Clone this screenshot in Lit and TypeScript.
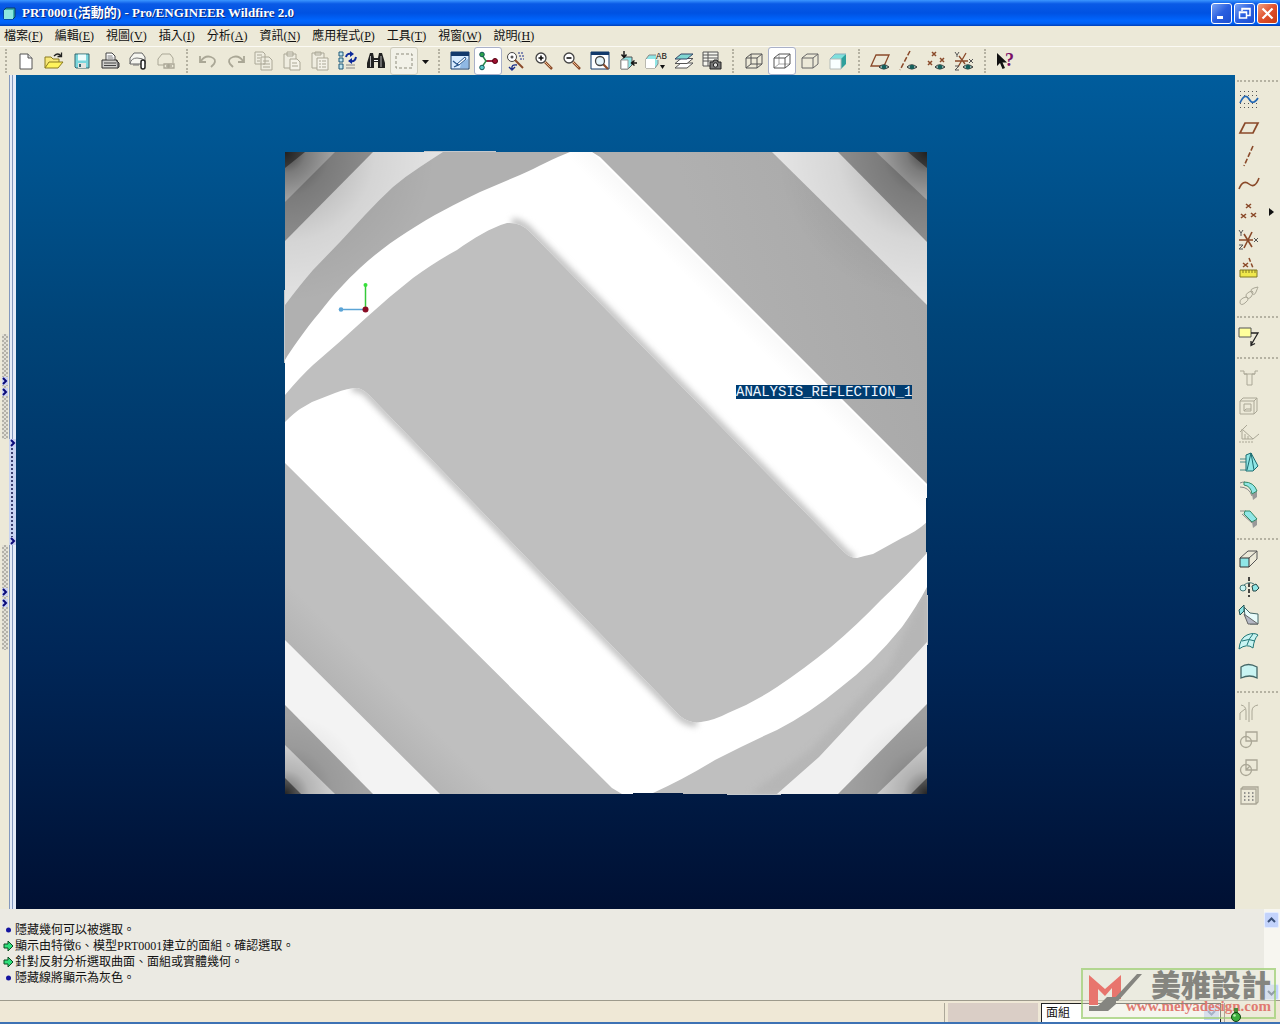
import { LitElement, html, css, svg, nothing } from "lit";
import { customElement, property } from "lit/decorators.js";
import { classMap } from "lit/directives/class-map.js";

const brown = "#8a4a2a";
const cyan = "#8fe6e6";
const pale = "#c9f4f2";
const dim = "#aaa796";

const eye = svg`<path d="M9 16q4.500-4.500 10 0q-5.500 4-10 0z" fill="#9fc4bf" stroke="#333"/><circle cx="14" cy="16" r="2.300" fill="#17605c"/>`;
const lens = (sign: unknown) => svg`<path d="M11 11l7 7" stroke="#8a4a2a" stroke-width="2.500"/><path d="M10.500 10.500l6 6" stroke="#e9b98a"/><circle cx="7" cy="7" r="5" fill="#fff" stroke="#444" stroke-width="1.300"/>${sign}`;

const icons: Record<string, unknown> = {
  fresh: svg`<path d="M4 3h8l4 4v11h-12z" fill="#fff" stroke="#555"/><path d="M12 3v4h4" fill="#ddd" stroke="#555"/>`,
  open: svg`<path d="M1 17V6h6l2 2h6v3" fill="#f8e878" stroke="#8a7a20"/><path d="M1 17l4-6h14l-5 6z" fill="#fff35c" stroke="#8a7a20"/><path d="M10 5q4-4 7 0M17.500 1.500v4h-4" fill="none" stroke="#222" stroke-width="1.300"/>`,
  save: svg`<path d="M3 3h14v14h-13l-1-1z" fill="#7ad6dc" stroke="#33666e"/><path d="M6 3.500h8v6h-8z" fill="#eefcfc"/><path d="M6 12h8v5h-8z" fill="#e4e4e0"/><path d="M7 13h2v3h-2z" fill="#33666e"/>`,
  print: svg`<path d="M6 9V2h6l3 3v4" fill="#fff" stroke="#444"/><path d="M7.500 5h5M7.500 7h6" stroke="#777"/><path d="M2 9h15l1 3v5h-16z" fill="#cfcfcb" stroke="#333"/><path d="M4 12h12M4 14.500h12" stroke="#444"/><path d="M16 9l3 3v4l-1.500 1" fill="#777" stroke="#333"/>`,
  mail: svg`<path d="M2 13v-6l4-5h8l3 4v7z" fill="#f6f6f0" stroke="#666"/><path d="M2 13q1-6 7-6t8 3" fill="none" stroke="#777"/><path d="M5 14h6" stroke="#777"/><rect x="13" y="9" width="4" height="9" rx="2" fill="#fff" stroke="#222" stroke-width="1.500"/>`,
  link: svg`<path d="M2 14v-6l4-5h8l3 4v5M2 14h6" fill="none" stroke="${dim}"/><path d="M8 13h5v4h-5zM12 13h6v4h-6zM10 15h6" fill="none" stroke="${dim}" stroke-width="1.300"/>`,
  undo: svg`<path d="M2 5v6h6M3 10q4-6 10-4t3 7l-3 3" fill="none" stroke="${dim}" stroke-width="1.800"/>`,
  redo: svg`<path d="M18 5v6h-6M17 10q-4-6-10-4t-3 7l3 3" fill="none" stroke="${dim}" stroke-width="1.800"/>`,
  copy: svg`<path d="M1 1h8l2 2v10h-10zM7 6h8l3 3v10h-11z" fill="#efede0" stroke="${dim}"/><path d="M3 4h5M3 7h3M3 10h3M9 10h6M9 13h7M9 16h7" stroke="${dim}"/>`,
  paste: svg`<path d="M2 3h12v14h-12zM5 1h6v4h-6z" fill="#efede0" stroke="${dim}"/><path d="M8 8h7l3 3v8h-10z" fill="#f4f2e8" stroke="${dim}"/><path d="M10 12h5M10 15h6" stroke="${dim}"/>`,
  pasteSpecial: svg`<path d="M2 2h12v15h-12zM5 1h6v3h-6z" fill="#efede0" stroke="${dim}"/><path d="M7 7h11v12h-11z" fill="#f4f2e8" stroke="${dim}"/><path d="M9 10h2M12 10h4M9 13h2M12 13h4M9 16h2M12 16h4" stroke="${dim}"/>`,
  regen: svg`<path d="M1 1h4v4h-4zM1 7h4v4h-4zM1 13h4v5h-4z" fill="#bfe4ee" stroke="#1f5878"/><path d="M8 14h9M8 17h9" stroke="#888"/><path d="M8 6q1-4 5-3M18 6q-1 5-5 4" fill="none" stroke="#0d2a9a" stroke-width="2"/><path d="M12 0l4 3-4 3zM14 7l-4 3 4 3z" fill="#0d2a9a"/>`,
  find: svg`<path d="M4 2h3l1 5h4l1-5h3l3 10v5h-7v-6h-4v6h-7v-5z" fill="#222"/><path d="M4.500 5v11M15 5v11" stroke="#b4b4b4"/><path d="M8 9.500h4" stroke="#fff"/>`,
  marquee: svg`<rect x="2" y="3" width="16" height="14" fill="none" stroke="#8d8b7c" stroke-dasharray="3 2"/>`,
  repaint: svg`<path d="M1 1h18v17h-18z" fill="#d8ecff" stroke="#123a6c"/><path d="M1 1h18v4h-18z" fill="#123a6c"/><path d="M10 17q0-6 8-9v9z" fill="#8fb8e4"/><path d="M7 13l8-7 1 2-7 6z" fill="#fff" stroke="#26558c"/><path d="M3 10l5 4-4 2" fill="none" stroke="#26558c" stroke-width="1.300"/>`,
  spin: svg`<path d="M8 10h8" stroke="#8a1030" stroke-width="1.800"/><path d="M4 4l4 6-4 6" fill="none" stroke="#2a8a4a" stroke-width="1.500"/><circle cx="4" cy="3.500" r="2.300" fill="#2aa34a" stroke="#155"/><circle cx="17" cy="10" r="2.500" fill="#a01030" stroke="#501"/><circle cx="4" cy="16.500" r="2.300" fill="#59c8c8" stroke="#155"/>`,
  orient: svg`<circle cx="6" cy="6" r="4.500" fill="#fff" stroke="#444"/><circle cx="6" cy="6" r="1.500" fill="#555"/><path d="M9 9l8 8" stroke="#8a4a2a" stroke-width="2"/><path d="M12 2h6M13 5h6M14 8h4" stroke="#1d2f8a" stroke-dasharray="2 1"/><path d="M11 14q-6-1-5 4M3 16l3 3 3-3" fill="none" stroke="#1d2f8a" stroke-width="1.400"/>`,
  zoomIn: lens(svg`<path d="M7 4.500v5M4.500 7h5" stroke="#111" stroke-width="1.600"/>`),
  zoomOut: lens(svg`<path d="M4.500 7h5" stroke="#111" stroke-width="1.600"/>`),
  refit: svg`<path d="M1 1h18v17h-18z" fill="#fff" stroke="#123a6c"/><path d="M1 1h18v3h-18z" fill="#123a6c"/><path d="M13 13l5 5" stroke="#8a4a2a" stroke-width="2.200"/><circle cx="10" cy="10" r="4.500" fill="#e4f4fa" stroke="#444" stroke-width="1.300"/>`,
  reorient: svg`<path d="M3 9l4-3h7v8l-4 4h-7z" fill="${cyan}" stroke="#555"/><path d="M3 9h7v9h-7z" fill="#fff" stroke="#999"/><path d="M6 0v6M3.500 3.500l2.500 3 2.500-3M19 12h-5M16.500 9.500l-3 2.500 3 2.500" fill="none" stroke="#111" stroke-width="1.400"/>`,
  views: svg`<path d="M0 8l3-4h9v9l-3 4h-9z" fill="${cyan}" stroke="#888"/><path d="M0 8h9v9h-9z" fill="#fff"/><path d="M10 0h10v9h-10z" fill="#ece9d8"/><text x="10" y="8" font-size="9" font-family="Liberation Mono, monospace" fill="#111">AB</text><path d="M14 14h5l-2.500 4z" fill="#111"/>`,
  layers: svg`<path d="M1 17l6-5h12l-6 5z" fill="#fff" stroke="#555"/><path d="M1 12.500l6-5h12l-6 5z" fill="#fff" stroke="#555"/><path d="M1 8l6-5h12l-6 5z" fill="#7fd6d2" stroke="#346"/>`,
  viewManager: svg`<path d="M1 1h15v14h-15zM1 4h15M1 7h15M1 10h15M6 1v14" fill="#f5f5ee" stroke="#555"/><path d="M8 11h3l1-2h3l1 2h3v7h-11z" fill="#777" stroke="#222"/><circle cx="13.500" cy="14" r="2.200" fill="#ddd" stroke="#222"/>`,
  wire: svg`<path d="M2 7h11v10h-11zM7 3h11v10h-11zM2 7l5-4M13 7l5-4M13 17l5-4M2 17l5-4" fill="none" stroke="#555"/>`,
  hidden: svg`<path d="M7 3v10h11M2 17l5-4" fill="none" stroke="#a8a8a8"/><path d="M2 7h11v10h-11zM2 7l5-4h11v10l-5 4M13 7l5-4" fill="none" stroke="#555"/>`,
  noHidden: svg`<path d="M2 7h11v10h-11zM2 7l5-4h11v10l-5 4M13 7l5-4" fill="none" stroke="#666"/>`,
  shaded: svg`<path d="M2 8l5-5h10l1 1-4 4z" fill="#7fe0dc"/><path d="M13 8l5-5v10l-5 5z" fill="#2fa09c"/><path d="M2 8h11v10h-11z" fill="#f8ffff" stroke="#b4bcba"/><path d="M2 8l5-5h11" fill="none" stroke="#8ab"/>`,
  planes: svg`<path d="M1 15l5-11h13l-5 11z" fill="none" stroke="${brown}" stroke-width="1.300"/>${eye}`,
  axes: svg`<path d="M12 0l-10 19" stroke="${brown}" stroke-width="1.500" stroke-dasharray="5 2"/>${eye}`,
  points: svg`<path d="M6 1l4 4M10 1l-4 4M2 10l4 4M6 10l-4 4M14 7l4 4M18 7l-4 4" stroke="${brown}" stroke-width="1.500"/>${eye}`,
  csys: svg`<path d="M1 10h13M12 2l-8 14M5 5l6 8" stroke="${brown}" stroke-width="1.300"/><path d="M1 1l2 3 2-3M3 4v2M1 15h4l-4 4h4M15 8l4 4M19 8l-4 4" fill="none" stroke="#555"/>${eye}`,
  help: svg`<path d="M1 2v13l3-3 2.500 6 2.500-1-2.500-5.500h4.500z" fill="#111"/><text x="9" y="15" font-size="18" font-weight="bold" font-family="Liberation Serif, serif" fill="#7a1068">?</text>`,
  sketch: svg`<path d="M1 1.500h18M1 5.500h18M1 13.500h18M1 17.500h18" stroke="#555" stroke-dasharray="1 3"/><path d="M1 13q5-11 9-4t9-1" fill="none" stroke="#2468b4" stroke-width="1.700"/>`,
  plane: svg`<path d="M1 15l5-10h13l-5 10z" fill="none" stroke="${brown}" stroke-width="1.700"/>`,
  axis: svg`<path d="M14 0l-9 20" stroke="${brown}" stroke-width="1.600" stroke-dasharray="5 2"/>`,
  curve: svg`<path d="M0 15q4-10 10-5t10-6" fill="none" stroke="${brown}" stroke-width="1.600"/>`,
  point: svg`<path d="M7 2l5 4M12 2l-5 4M2 12l5 4M7 12l-5 4M12 11l5 4M17 11l-5 4" stroke="${brown}" stroke-width="1.600"/>`,
  coord: svg`<path d="M0 10h14M13 2l-8 16M5 4l8 13" stroke="${brown}" stroke-width="1.600"/><path d="M0 0l2 3 2-3M2 3v3M0 15h4l-4 4h4M15 8l4 4M19 8l-4 4" fill="none" stroke="#555"/>`,
  analysis: svg`<path d="M4 5l5 4M9 5l-5 4" stroke="${brown}" stroke-width="1.500"/><path d="M10 0l4 10" stroke="${brown}" stroke-width="1.500" stroke-dasharray="4 2"/><path d="M1 12h17v7h-17z" fill="#f0e84c" stroke="#807820"/><path d="M4 12v3M7 12v3M10 12v3M13 12v3M16 12v3" stroke="#807820"/>`,
  chain: svg`<path d="M1 17q-1-3 3-5t5 0-3 5-5 0zM7 11q-1-3 3-5t4 0-2 5-5 0zM12 6q-1-3 3-4t4-1-2 5-5 0z" fill="none" stroke="${dim}"/>`,
  note: svg`<path d="M0 1h12v9h-12z" fill="#ffff9c" stroke="#555"/><path d="M12 6h7l-7 12M12 14v4.500l4-2" fill="none" stroke="#222" stroke-width="1.300"/>`,
  hole: svg`<path d="M1 3h4v3h3v11h5V6h3V3h3M5 6h11" fill="none" stroke="${dim}"/>`,
  shell: svg`<path d="M1 5l3-3h14v13l-3 3h-14zM1 5h14v13M15 5l3-3M5 8h7v7h-7zM5 15l2-2h5" fill="none" stroke="${dim}"/>`,
  rib: svg`<path d="M1 8l7-7M3 5l11 10h-11zM6 10v5M9 12v3M14 15l6-5" fill="none" stroke="${dim}"/><path d="M0 18h15" stroke="${dim}" stroke-dasharray="2 1"/>`,
  draft: svg`<path d="M1 7h8M1 10h7M1 18h7" stroke="#4a8a88"/><path d="M7 3l5-2 7 13-5 5h-7z" fill="${cyan}" stroke="#1c6c70"/><path d="M12 1l-4 17M12 1l3 17" fill="none" stroke="#1c6c70"/>`,
  round: svg`<path d="M13 14l5-3v6l-4 3z" fill="#999"/><path d="M1 3q2-1 5-1M1 7q9 0 12 9" fill="none" stroke="#888"/><path d="M5 2q10 0 13 9l-5 3q-1-8-8-9z" fill="${cyan}" stroke="#386"/>`,
  chamfer: svg`<path d="M1 3h6M3 6l10 9" fill="none" stroke="#888"/><path d="M13 14l5-3v6l-4 3z" fill="#999"/><path d="M6 3h5l7 8-5 3-8-8z" fill="${cyan}" stroke="#386"/>`,
  extrude: svg`<path d="M9 2h9v8l-8 8M1 9l8-7" fill="none" stroke="#555"/><path d="M1 9h9v9h-9z" fill="${cyan}" stroke="#333"/><path d="M10 9l8-7" stroke="#555"/>`,
  revolve: svg`<path d="M10 0v20" stroke="#111" stroke-width="1.500" stroke-dasharray="4 2"/><circle cx="4" cy="11" r="3" fill="${pale}" stroke="#477"/><path d="M13 9l4-2 3 4-3 3h-3z" fill="${cyan}" stroke="#244"/><path d="M5 8q5-4 10-1" fill="none" stroke="#477"/>`,
  sweep: svg`<path d="M5 2l6 6 8 1v10h-8l-5-8z" fill="#e8fbfa" stroke="#466"/><path d="M5 9l4 10h10z" fill="#b4b8c4" stroke="#666"/><path d="M0 5l5-5v6l-4 4z" fill="${cyan}" stroke="#255"/>`,
  boundary: svg`<path d="M0 16q1-11 8-14q7-3 11 0q-4 4-5 13q-6-5-14 1z" fill="${pale}" stroke="#277"/><path d="M8 12q2-7 6-11M3 8q7-3 13 0" fill="none" stroke="#277"/>`,
  fill: svg`<path d="M2 6q7-5 16 0v11q-7-4-16 0z" fill="${pale}" stroke="#466" stroke-width="1.300"/>`,
  mirror: svg`<path d="M10 0v20M2 3q5 1 5 6v9M19 3q-6 1-6 6v9M1 18v-7l5-4" fill="none" stroke="${dim}"/>`,
  merge: svg`<path d="M7 2h11v9h-11z" fill="none" stroke="${dim}" stroke-width="1.300"/><circle cx="7" cy="12" r="5.500" fill="none" stroke="${dim}" stroke-width="1.300"/>`,
  trim: svg`<path d="M7 2h11v10h-11zM7 12l4-4" fill="none" stroke="${dim}" stroke-width="1.300"/><circle cx="7" cy="12" r="5.500" fill="none" stroke="${dim}" stroke-width="1.300"/>`,
  pattern: svg`<path d="M2 3h15v15h-15zM2 3l2-2h15v15l-2 2" fill="none" stroke="${dim}" stroke-width="1.300"/><path d="M5 7h10M5 10.500h10M5 14h10" stroke="#777" stroke-width="1.500" stroke-dasharray="1.500 2.500"/>`,
};

@customElement("tool-button")
class ToolButton extends LitElement {
  @property() icon = "";
  @property() label = "";
  @property({ type: Boolean }) pressed = false;
  @property({ type: Boolean }) framed = false;

  static styles = css`
    :host { display: block; flex: none; }
    .tool {
      display: flex; align-items: center; justify-content: center;
      width: 28px; height: 28px; padding: 0;
      border: 1px solid transparent; border-radius: 3px; background: none;
    }
    .pressed { background: #fff; border-color: #a9b0c8; }
    .framed { background: #f2f1e8; border-color: #cdcbbb; }
    .glyph { width: 20px; height: 20px; overflow: visible; }
  `;

  render() {
    return html`<button class=${classMap({ tool: true, pressed: this.pressed, framed: this.framed })} aria-label=${this.label} title=${this.label}>
      <svg class="glyph" viewBox="0 0 20 20">${icons[this.icon]}</svg>
    </button>`;
  }
}

@customElement("model-view")
class ModelView extends LitElement {
  static styles = css`
    :host {
      display: block; min-width: 0; min-height: 0;
      background: linear-gradient(#005c9c, #004478 30%, #002657 70%, #001033);
    }
    .scene { display: block; width: 100%; height: 100%; }
    .tag { font: 14px "Liberation Mono", monospace; fill: #eef6ff; }
  `;

  render() {
    const shapeA = "M285 360C291 350 304 331 320 312C334 294 346 281 360 268C375 254 390 243 407 232C433 215 455 204 480 192L520 175C538 167 554 158 570 152H592L600 157L927 484V522C919 529 911 534 902 538L873 554Q864 556 857 558Q850 558 844 552L530 232Q521 222 507 223C490 228 474 238 457 250C440 259 426 269 413 278Q390 296 367 317Q340 342 313 365Q300 377 285 395Z";
    const shapeB = "M285 422Q294 413 300 409L312 402L335 393Q348 388 357 388Q363 389 369 395L680 716Q690 724 701 722Q715 720 728 713Q753 703 777 687Q804 669 831 647Q857 625 881 600Q900 582 914 567L927 553V587Q917 606 902 627Q872 664 840 688Q810 713 777 730Q748 743 715 760Q684 779 653 793L640 794H622L612 788L285 463Z";
    return html`<svg class="scene" viewBox="16 75 1219 834" role="img" aria-label="ANALYSIS_REFLECTION_1">
      <defs>
        <clipPath id="face"><rect x="285" y="152" width="642" height="642"></rect></clipPath>
        <clipPath id="clipA"><path d=${shapeA}></path></clipPath>
        <clipPath id="clipB"><path d=${shapeB}></path></clipPath>
        <filter id="soft" x="-20%" y="-20%" width="140%" height="140%" color-interpolation-filters="sRGB"><feGaussianBlur stdDeviation="3"></feGaussianBlur></filter>
        <linearGradient id="upper" gradientUnits="userSpaceOnUse" x1="700" y1="240" x2="890" y2="180"><stop offset="0" stop-color="#b0b0b0"></stop><stop offset="1" stop-color="#a8a8a8"></stop></linearGradient>
        <linearGradient id="sheen" gradientUnits="userSpaceOnUse" x1="730" y1="320" x2="770" y2="280"><stop offset="0" stop-color="#eee" stop-opacity="0"></stop><stop offset="1" stop-color="#eee"></stop></linearGradient>
        <linearGradient id="lower" gradientUnits="userSpaceOnUse" x1="362" y1="717" x2="392" y2="687"><stop offset="0" stop-color="#b4b4b4"></stop><stop offset="1" stop-color="#bfbfbf"></stop></linearGradient>
        ${[["tl", 285, 152, 150], ["tr", 927, 152, 150], ["bl", 285, 794, 80], ["br", 927, 794, 80]].map(([id, x, y, r]) => svg`
          <radialGradient id="${id}" gradientUnits="userSpaceOnUse" cx="${x}" cy="${y}" r="${r}">
            <stop offset="0" stop-opacity=".7"/><stop offset=".14" stop-opacity=".36"/><stop offset=".3" stop-opacity=".18"/><stop offset=".6" stop-opacity=".06"/><stop offset="1" stop-opacity="0"/>
          </radialGradient>`)}
      </defs>
      <path d="M424 151h72v2h-72zM284 290h2v73h-2zM926 595h2v50h-2zM727 793h54v2h-54z" fill="#c4c8cc"></path>
      <g clip-path="url(#face)">
        <path d="M285 152h642v642h-642z" fill="#bfbfbf"></path>
        <path d="M285 152H600L540 180L400 250L285 370z" fill="#b0b0b0"></path>
        <path d="M285 152H443Q432 159 420 167Q406 176 393 187Q379 200 365 215L340 242L313 270Q300 285 285 305z" fill="#e2e2e2"></path>
        <path d="M285 152H373L285 241z" fill="#969696"></path>
        <path d="M285 152H335L285 202z" fill="#c0c0c0"></path>
        <path d="M285 152H305L285 168z" fill="#6a6a6a"></path>
        <path d="M592 152H927V484z" fill="url(#upper)"></path>
        <path d="M772 152H927V305z" fill="#e4e4e4"></path>
        <path d="M838 152H927V242z" fill="#969696"></path>
        <path d="M876 152H927V200z" fill="#c0c0c0"></path>
        <path d="M908 152H927V168z" fill="#6a6a6a"></path>
        <path d="M285 550V794H510z" fill="url(#lower)"></path>
        <path d="M285 640V794H440z" fill="#f3f3f3"></path>
        <path d="M285 705V794H373z" fill="#a4a4a4"></path>
        <path d="M285 745V794H335z" fill="#dcdcdc"></path>
        <path d="M285 778V794H301z" fill="#777"></path>
        <path d="M927 585L890 665L810 750L750 794H927z" fill="#b6b6b6" filter="url(#soft)"></path>
        <path d="M927 642Q895 678 860 713L819 757L777 794H927z" fill="#f1f1f1"></path>
        <path d="M927 704L838 794H927z" fill="#a0a0a0"></path>
        <path d="M927 746L877 794H927z" fill="#d8d8d8"></path>
        <path d="M927 778L911 794H927z" fill="#777"></path>
        <path d="M285 152h150v150h-150z" fill="url(#tl)"></path>
        <path d="M777 152h150v150h-150z" fill="url(#tr)"></path>
        <path d="M285 664h130v130h-130z" fill="url(#bl)"></path>
        <path d="M797 664h130v130h-130z" fill="url(#br)"></path>
        <path d=${shapeA} fill="#fff"></path>
        <g clip-path="url(#clipA)">
          <path d="M560 120L940 500V530L560 152z" fill="url(#sheen)"></path>
          <path d="M512 222Q523 223 530 232L844 552Q848 557 854 558" fill="none" stroke="#bfbfbf" stroke-width="8" filter="url(#soft)"></path>
        </g>
        <path d=${shapeB} fill="#fff"></path>
        <g clip-path="url(#clipB)">
          <path d="M352 388Q363 387 369 395L680 716Q686 722 697 723" fill="none" stroke="#bfbfbf" stroke-width="8" filter="url(#soft)"></path>
        </g>
      </g>
      <path d="M926 498h2v54h-2z" fill="#00305f"></path>
      <path d="M633 793h50v2h-50z" fill="#001a43"></path>
      <path d="M365.500 309V286" stroke="#36c83a" stroke-width="1.500"></path>
      <path d="M365 309.500H342" stroke="#5ba4d6" stroke-width="1.500"></path>
      <circle cx="365.500" cy="285" r="2" fill="#36e03a"></circle>
      <circle cx="341" cy="309.500" r="2.300" fill="#5ba4d6"></circle>
      <circle cx="365.500" cy="309.500" r="3" fill="#8a0c24"></circle>
      <rect x="736" y="385" width="176" height="14" fill="#003c70"></rect>
      <text class="tag" x="736" y="396">ANALYSIS_REFLECTION_1</text>
    </svg>`;
  }
}

type Tool = [icon: string, label: string, state?: "pressed" | "framed"];

const topGroups: Tool[][] = [
  [["fresh", "新建"], ["open", "開啟"], ["save", "儲存"], ["print", "列印"], ["mail", "郵寄"], ["link", "連結"]],
  [["undo", "復原"], ["redo", "重做"], ["copy", "複製"], ["paste", "貼上"], ["pasteSpecial", "選擇性貼上"], ["regen", "再生"], ["find", "尋找"], ["marquee", "選取框", "framed"]],
  [["repaint", "重畫"], ["spin", "旋轉中心", "pressed"], ["orient", "定向模式"], ["zoomIn", "放大"], ["zoomOut", "縮小"], ["refit", "重新調整"], ["reorient", "重定向"], ["views", "視圖清單"], ["layers", "層"], ["viewManager", "視圖管理器"]],
  [["wire", "線框"], ["hidden", "隱藏線", "pressed"], ["noHidden", "無隱藏線"], ["shaded", "著色"]],
  [["planes", "基準平面"], ["axes", "基準軸"], ["points", "基準點"], ["csys", "座標系"]],
  [["help", "說明"]],
];

const sideGroups: Tool[][] = [
  [["sketch", "草繪"], ["plane", "平面"], ["axis", "軸"], ["curve", "曲線"], ["point", "點"], ["coord", "座標系"], ["analysis", "分析"], ["chain", "參照"]],
  [["note", "註解"]],
  [["hole", "孔"], ["shell", "殼"], ["rib", "筋"], ["draft", "拔模"], ["round", "倒圓角"], ["chamfer", "倒角"]],
  [["extrude", "拉伸"], ["revolve", "旋轉"], ["sweep", "掃描"], ["boundary", "邊界混合"], ["fill", "填充"]],
  [["mirror", "鏡像"], ["merge", "合併"], ["trim", "修剪"], ["pattern", "陣列"]],
];

const menus: [string, string][] = [
  ["檔案", "F"], ["編輯", "E"], ["視圖", "V"], ["插入", "I"], ["分析", "A"],
  ["資訊", "N"], ["應用程式", "P"], ["工具", "T"], ["視窗", "W"], ["說明", "H"],
];

const messages: [boolean, string][] = [
  [false, "隱藏幾何可以被選取。"],
  [true, "顯示由特徵6、模型PRT0001建立的面組。確認選取。"],
  [true, "針對反射分析選取曲面、面組或實體幾何。"],
  [false, "隱藏線將顯示為灰色。"],
];

const chevron = svg`<path d="M1 1l3 3-3 3" fill="none" stroke="#0a0a78" stroke-width="2"/>`;

@customElement("app-root")
class AppRoot extends LitElement {
  static styles = css`
    :host {
      display: flex; flex-direction: column; min-height: 100vh; position: relative;
      background: #ece9d8; color: #111;
      font: 12px/16px "Liberation Serif", "Noto Sans CJK TC", serif;
    }
    * { box-sizing: border-box; }
    button, select { font: inherit; color: inherit; }

    .title {
      display: flex; align-items: center; gap: 6px; height: 26px; padding: 0 2px 0 3px;
      background: linear-gradient(#3c96ff, #0a5ae6 15%, #0052e2 50%, #0066ff 80%, #0060f4 90%, #0040b8);
    }
    .badge { width: 13px; height: 13px; flex: none; }
    .name { flex: 1; margin: 0; color: #fff; font-size: 13px; font-weight: bold; text-shadow: 1px 1px #0a2a80; }
    .controls { display: flex; gap: 2px; }
    .control {
      display: flex; align-items: center; justify-content: center;
      width: 21px; height: 21px; padding: 0;
      border: 1px solid #fff; border-radius: 3px;
      background: linear-gradient(135deg, #7ba4f4, #2a5fe0 50%, #1d4fd0);
    }
    .close { background: linear-gradient(135deg, #f0a080, #e0502c 50%, #c83c14); }
    .sign { width: 15px; height: 15px; }

    .menus { display: flex; height: 21px; padding: 2px 0 0 4px; border-bottom: 1px solid #fbfaf4; }
    .menu { height: 16px; padding: 0; margin: 0 12px 0 0; border: 0; background: none; white-space: nowrap; line-height: 16px; }

    .tools { display: flex; align-items: center; height: 28px; }
    .grip { width: 12px; height: 24px; flex: none; display: flex; justify-content: center; }
    .grip::before { content: ""; border-left: 2px dotted #b5b2a2; }
    .inner { width: 14px; }
    .drop { width: 14px; height: 28px; padding: 0; border: 0; background: none; }
    .caret { display: block; width: 9px; height: 9px; margin: 0 auto; }

    .work { flex: 1; display: grid; grid-template-columns: 16px minmax(0, 1fr) 45px; min-height: 0; }
    .gutter { display: flex; }
    .sash { width: 9px; display: flex; flex-direction: column; align-items: center; justify-content: center; gap: 106px; }
    .rail {
      width: 7px; display: flex; align-items: center;
      background: linear-gradient(90deg, #8398bd 1px, #e4ecf8 1px 3px, #8398bd 3px 4px, #e4ecf8 4px);
    }
    .tab {
      display: flex; flex-direction: column; align-items: center; justify-content: center; gap: 3px;
      width: 6px; height: 105px; padding: 0; border: 0;
      background: repeating-conic-gradient(#b3b1a8 0 25%, #e2e0d6 0 50%) 0 0 / 4px 4px;
    }
    .slide {
      justify-content: space-between; width: 7px; height: 106px;
      background: radial-gradient(#3b4070 1px, transparent 1px) 1px 0 / 4px 4px repeat-y, #c9d4f2;
    }
    .arrow { width: 6px; height: 8px; background: #c9d0f0; flex: none; }

    .side { display: flex; flex-direction: column; background: #ece9d8; }
    .rule { height: 13px; display: flex; align-items: center; padding: 0 2px; }
    .rule:first-child { height: 11px; }
    .rule::before { content: ""; flex: 1; border-top: 2px dotted #b5b2a2; }
    .row { display: flex; align-items: center; justify-content: space-between; height: 28px; padding-right: 4px; }
    .fly { width: 9px; height: 12px; padding: 0; border: 0; background: none; }
    .flyicon { display: block; width: 9px; height: 9px; }

    .log { display: flex; height: 91px; background: #ebeae3; }
    .lines { flex: 1; list-style: none; margin: 0; padding: 13px 0 0 3px; }
    .line { display: flex; align-items: center; gap: 1px; height: 16px; white-space: nowrap; }
    .mark { width: 11px; height: 12px; flex: none; }
    .scroll { width: 16px; display: flex; flex-direction: column; justify-content: space-between; padding-top: 3px; background: #f7f6f0; }
    .step { width: 15px; height: 16px; padding: 0; border: 1px solid #e4ecff; border-radius: 2px; background: #c3d3fb; }
    .stepicon { display: block; width: 9px; height: 9px; margin: 0 auto; }

    .status {
      display: flex; justify-content: flex-end; align-items: stretch; gap: 3px;
      height: 24px; padding: 2px 0 0;
      border-top: 1px solid #9d9a8c; border-bottom: 2px solid #3d72b4;
      background: #efe8d6;
    }
    .cell { width: 94px; padding-left: 3px; border-left: 1px solid #aca899; display: flex; }
    .progress { flex: 1; background: #dacec6; }
    .filter { position: relative; display: flex; width: 180px; }
    .pick { flex: 1; appearance: none; padding: 0 4px; border: 1px solid #222; border-bottom: 0; border-radius: 0; background: #fff; }
    .pickarrow { position: absolute; right: 2px; top: 2px; width: 15px; height: 15px; padding: 3px; background: #c3d3fb; pointer-events: none; }
    .light { position: relative; z-index: 1; width: 56px; padding: 5px 0 0 5px; border-left: 1px solid #aca899; }
    .bulb { display: block; width: 11px; height: 14px; }

    .brand {
      position: absolute; right: 4px; bottom: 5px; width: 195px; height: 51px;
      display: flex; padding: 0 3px; pointer-events: none;
      border: 2px solid rgba(140, 200, 90, 0.6); background: rgba(236, 236, 222, 0.5);
    }
    .emblem { width: 56px; height: 46px; flex: none; }
    .words { flex: 1; margin-left: -22px; display: flex; flex-direction: column; align-items: flex-end; }
    .cn { font: 900 30px/26px "Noto Sans CJK TC", sans-serif; color: #85857f; }
    .url { font: bold 15px/20px "Liberation Serif", serif; color: #e07a70; text-decoration: none; }
  `;

  private tool([icon, label, state]: Tool) {
    return html`<tool-button .icon=${icon} .label=${label} .pressed=${state === "pressed"} .framed=${state === "framed"}></tool-button>`;
  }

  render() {
    return html`
      <header class="title">
        <svg class="badge" viewBox="0 0 13 13"><path d="M1 3l2-2h9v9l-2 2H1z" fill="#3ab4ac" stroke="#0c3c60"/><path d="M1 3h9v9H1z" fill="#8ce8e0"/></svg>
        <h1 class="name">PRT0001(活動的) - Pro/ENGINEER Wildfire 2.0</h1>
        <div class="controls">
          <button class="control" aria-label="最小化"><svg class="sign" viewBox="0 0 15 15"><path d="M3 11.500h6" stroke="#fff" stroke-width="3"/></svg></button>
          <button class="control" aria-label="還原"><svg class="sign" viewBox="0 0 15 15"><path d="M5 5V2.500h8v7h-3M2.500 6h7v6h-7zM2 6.500h8M5 3h8" fill="none" stroke="#fff" stroke-width="1.500"/></svg></button>
          <button class="control close" aria-label="關閉"><svg class="sign" viewBox="0 0 15 15"><path d="M2.500 2.500l10 10M12.500 2.500l-10 10" stroke="#fff" stroke-width="2.200"/></svg></button>
        </div>
      </header>

      <nav class="menus">
        ${menus.map(([text, key]) => html`<button class="menu">${text}(<u>${key}</u>)</button>`)}
      </nav>

      <div class="tools" role="toolbar">
        ${topGroups.map((group, i) => html`
          <span class=${classMap({ grip: true, inner: i > 0 })}></span>
          ${group.map((t) => this.tool(t))}
          ${i === 1 ? html`<button class="drop" aria-label="選取選項"><svg class="caret" viewBox="0 0 9 9"><path d="M1 3h7l-3.500 4z" fill="#111"/></svg></button>` : nothing}
        `)}
      </div>

      <main class="work">
        <div class="gutter">
          <div class="sash">
            ${[0, 1].map(() => html`<button class="tab" aria-label="展開面板">
              <svg class="arrow" viewBox="0 0 6 8">${chevron}</svg>
              <svg class="arrow" viewBox="0 0 6 8">${chevron}</svg>
            </button>`)}
          </div>
          <div class="rail">
            <button class="tab slide" aria-label="調整面板">
              <svg class="arrow" viewBox="0 0 6 8">${chevron}</svg>
              <svg class="arrow" viewBox="0 0 6 8">${chevron}</svg>
            </button>
          </div>
        </div>
        <model-view></model-view>
        <aside class="side">
          ${sideGroups.map((group) => html`
            <div class="rule"></div>
            ${group.map((t) => html`<div class="row">${this.tool(t)}${t[0] === "point"
              ? html`<button class="fly" aria-label="更多點工具"><svg class="flyicon" viewBox="0 0 9 9"><path d="M2 0v8l5-4z" fill="#111"/></svg></button>`
              : nothing}</div>`)}
          `)}
        </aside>
      </main>

      <section class="log">
        <ul class="lines">
          ${messages.map(([prompt, text]) => html`<li class="line">
            <svg class="mark" viewBox="0 0 11 12">${prompt
              ? svg`<path d="M1 4h4V1l5 5-5 5V8H1z" fill="#2fe07c" stroke="#0a4a20"/>`
              : svg`<circle cx="5.500" cy="6" r="2.500" fill="#1414a0"/>`}</svg>
            <span>${text}</span>
          </li>`)}
        </ul>
        <div class="scroll">
          <button class="step" aria-label="向上捲動"><svg class="stepicon" viewBox="0 0 9 9"><path d="M1 6l3.500-3.500L8 6" fill="none" stroke="#3a5078" stroke-width="2"/></svg></button>
          <button class="step" aria-label="向下捲動"><svg class="stepicon" viewBox="0 0 9 9"><path d="M1 3l3.500 3.500L8 3" fill="none" stroke="#3a5078" stroke-width="2"/></svg></button>
        </div>
      </section>

      <footer class="status">
        <div class="cell"><div class="progress"></div></div>
        <div class="filter">
          <select class="pick" aria-label="選取過濾器"><option>面組</option></select>
          <svg class="pickarrow" viewBox="0 0 9 9"><path d="M1 3l3.500 3.500L8 3" fill="none" stroke="#6078b0" stroke-width="2"/></svg>
        </div>
        <div class="light"><svg class="bulb" viewBox="0 0 11 14"><path d="M4 0h4v5H4z" fill="#4a8a3a"/><circle cx="6" cy="9" r="4.500" fill="#3cae3c" stroke="#123c12"/><circle cx="4.500" cy="7.500" r="1.300" fill="#b8f0b0"/></svg></div>
      </footer>

      <div class="brand">
        <svg class="emblem" viewBox="0 0 56 46">
          <path d="M3 35V5l16 14L35 5v24h-9V18l-7 8-7-7v16z" fill="#e8756d"/>
          <path d="M3 36h9l9-9h9v7l-8 7H3zM51 4h5L32 31h-6z" fill="#858580"/>
        </svg>
        <div class="words">
          <span class="cn">美雅設計</span>
          <a class="url" href="http://www.meiyadesign.com">www.meiyadesign.com</a>
        </div>
      </div>
    `;
  }
}
